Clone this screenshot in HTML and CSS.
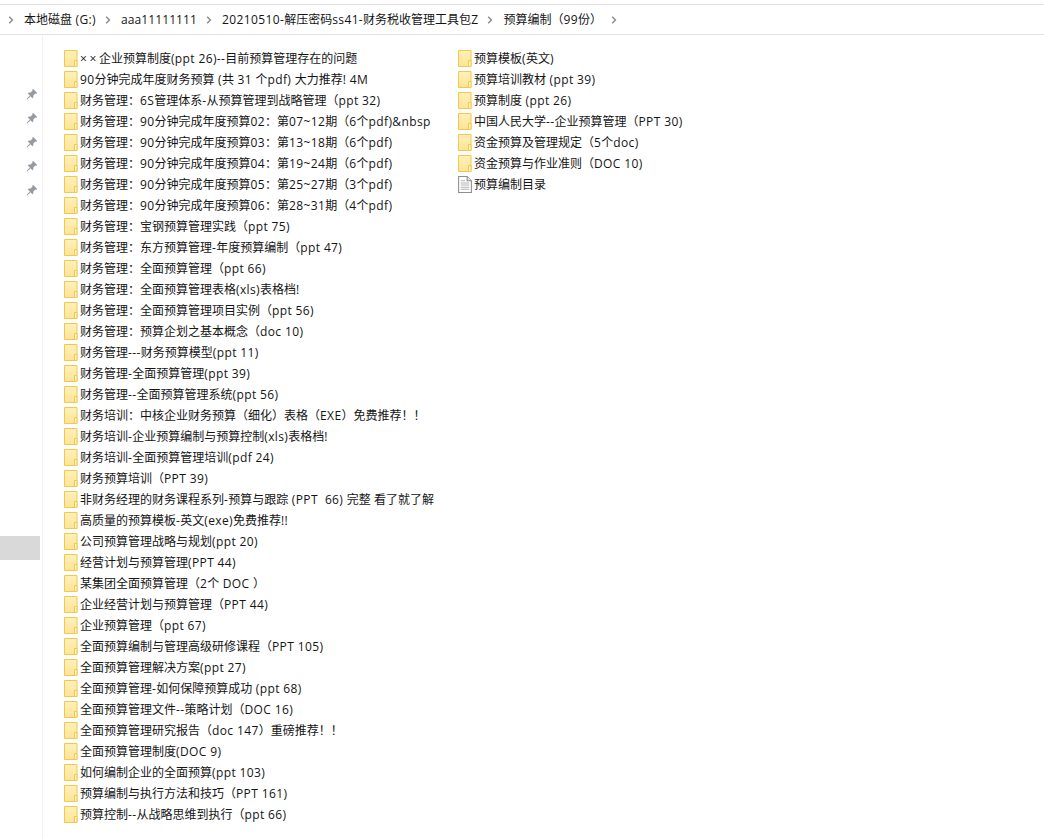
FILE: index.html
```html
<!DOCTYPE html>
<html lang="zh">
<head>
<meta charset="utf-8">
<title>预算编制（99份）</title>
<link rel="stylesheet" href="styles.css">
</head>
<body>
<svg class="defs" width="0" height="0" aria-hidden="true">
  <linearGradient id="fg" x1="0" y1="0" x2="0" y2="1"><stop offset="0" stop-color="#fff1ba"/><stop offset="1" stop-color="#fee394"/></linearGradient>
  <symbol id="folder" viewBox="0 0 14 17">
    <path d="M.5.5h12.5v16H.5z" fill="url(#fg)" stroke="#f2c84e"/>
    <path d="M10.5 16.5V10.5h2.5v6z" fill="#fff3c6" stroke="#f2c84e"/>
  </symbol>
  <symbol id="pin" viewBox="0 0 12 12">
    <path d="M7 .8l4.2 4.2-1 .8-.9-.3-2 2 .1 1.8-.9.9-2-2L1.2 11.4.6 10.8l3.3-3.4-2-2 .9-.9 1.8.1 2-2-.3-.9z" fill="#939aa1"/>
  </symbol>
  <symbol id="doc" viewBox="0 0 13 16">
    <path d="M.5.5h8l4 4v11H.5z" fill="#fff" stroke="#8e8e8e"/>
    <path d="M8.5.5v4h4" fill="#e6e6e6" stroke="#8e8e8e"/>
    <path d="M2.5 4.5h4M2.5 6.5h8M2.5 8.5h8M2.5 10.5h8M2.5 12.5h8" stroke="#b4b4b4"/>
  </symbol>
  <symbol id="chev" viewBox="0 0 6 8">
    <path d="M1.2 .8L4.4 4 1.2 7.2" fill="none" stroke="#8c8c8c" stroke-width="1.5"/>
  </symbol>
</svg>
<header class="crumbs">
  <svg class="sep"><use href="#chev"/></svg><span class="crumb">本地磁盘<span class="l"> (G:)</span></span>
  <svg class="sep"><use href="#chev"/></svg><span class="crumb tight">aaa11111111</span>
  <svg class="sep"><use href="#chev"/></svg><span class="crumb"><span class="l">20210510-</span>解压密码<span class="l">ss41-</span>财务税收管理工具包<span class="l">Z</span></span>
  <svg class="sep"><use href="#chev"/></svg><span class="crumb">预算编制（<span class="l">99</span>份）</span>
  <svg class="sep"><use href="#chev"/></svg>
</header>
<div class="main">
  <nav class="side">
    <div class="pins">
      <svg class="pin"><use href="#pin"/></svg>
      <svg class="pin"><use href="#pin"/></svg>
      <svg class="pin"><use href="#pin"/></svg>
      <svg class="pin"><use href="#pin"/></svg>
      <svg class="pin"><use href="#pin"/></svg>
    </div>
    <div class="selected"></div>
  </nav>
  <section class="files">
    <ul class="col first">
      <li><svg class="ic"><use href="#folder"/></svg><span><span class="x">××</span>企业预算制度<span class="l">(ppt 26)--</span>目前预算管理存在的问题</span></li>
      <li><svg class="ic"><use href="#folder"/></svg><span><span class="l">90</span>分钟完成年度财务预算<span class="l"> (</span>共<span class="l"> 31 </span>个<span class="l">pdf) </span>大力推荐<span class="l">! 4M</span></span></li>
      <li><svg class="ic"><use href="#folder"/></svg><span>财务管理：<span class="l">6S</span>管理体系<span class="l">-</span>从预算管理到战略管理（<span class="l">ppt 32)</span></span></li>
      <li><svg class="ic"><use href="#folder"/></svg><span>财务管理：<span class="l">90</span>分钟完成年度预算<span class="l">02</span>：第<span class="l">07~12</span>期（<span class="l">6</span>个<span class="l">pdf)&amp;nbsp</span></span></li>
      <li><svg class="ic"><use href="#folder"/></svg><span>财务管理：<span class="l">90</span>分钟完成年度预算<span class="l">03</span>：第<span class="l">13~18</span>期（<span class="l">6</span>个<span class="l">pdf)</span></span></li>
      <li><svg class="ic"><use href="#folder"/></svg><span>财务管理：<span class="l">90</span>分钟完成年度预算<span class="l">04</span>：第<span class="l">19~24</span>期（<span class="l">6</span>个<span class="l">pdf)</span></span></li>
      <li><svg class="ic"><use href="#folder"/></svg><span>财务管理：<span class="l">90</span>分钟完成年度预算<span class="l">05</span>：第<span class="l">25~27</span>期（<span class="l">3</span>个<span class="l">pdf)</span></span></li>
      <li><svg class="ic"><use href="#folder"/></svg><span>财务管理：<span class="l">90</span>分钟完成年度预算<span class="l">06</span>：第<span class="l">28~31</span>期（<span class="l">4</span>个<span class="l">pdf)</span></span></li>
      <li><svg class="ic"><use href="#folder"/></svg><span>财务管理：宝钢预算管理实践（<span class="l">ppt 75)</span></span></li>
      <li><svg class="ic"><use href="#folder"/></svg><span>财务管理：东方预算管理<span class="l">-</span>年度预算编制（<span class="l">ppt 47)</span></span></li>
      <li><svg class="ic"><use href="#folder"/></svg><span>财务管理：全面预算管理（<span class="l">ppt 66)</span></span></li>
      <li><svg class="ic"><use href="#folder"/></svg><span>财务管理：全面预算管理表格<span class="l">(xls)</span>表格档<span class="l">!</span></span></li>
      <li><svg class="ic"><use href="#folder"/></svg><span>财务管理：全面预算管理项目实例（<span class="l">ppt 56)</span></span></li>
      <li><svg class="ic"><use href="#folder"/></svg><span>财务管理：预算企划之基本概念（<span class="l">doc 10)</span></span></li>
      <li><svg class="ic"><use href="#folder"/></svg><span>财务管理<span class="l">---</span>财务预算模型<span class="l">(ppt 11)</span></span></li>
      <li><svg class="ic"><use href="#folder"/></svg><span>财务管理<span class="l">-</span>全面预算管理<span class="l">(ppt 39)</span></span></li>
      <li><svg class="ic"><use href="#folder"/></svg><span>财务管理<span class="l">--</span>全面预算管理系统<span class="l">(ppt 56)</span></span></li>
      <li><svg class="ic"><use href="#folder"/></svg><span>财务培训：中核企业财务预算（细化）表格（<span class="l">EXE</span>）免费推荐！！</span></li>
      <li><svg class="ic"><use href="#folder"/></svg><span>财务培训<span class="l">-</span>企业预算编制与预算控制<span class="l">(xls)</span>表格档<span class="l">!</span></span></li>
      <li><svg class="ic"><use href="#folder"/></svg><span>财务培训<span class="l">-</span>全面预算管理培训<span class="l">(pdf 24)</span></span></li>
      <li><svg class="ic"><use href="#folder"/></svg><span>财务预算培训（<span class="l">PPT 39)</span></span></li>
      <li><svg class="ic"><use href="#folder"/></svg><span>非财务经理的财务课程系列<span class="l">-</span>预算与跟踪<span class="l"> (PPT&nbsp; 66) </span>完整 看了就了解</span></li>
      <li><svg class="ic"><use href="#folder"/></svg><span>高质量的预算模板<span class="l">-</span>英文<span class="l">(exe)</span>免费推荐<span class="l">!!</span></span></li>
      <li><svg class="ic"><use href="#folder"/></svg><span>公司预算管理战略与规划<span class="l">(ppt 20)</span></span></li>
      <li><svg class="ic"><use href="#folder"/></svg><span>经营计划与预算管理<span class="l">(PPT 44)</span></span></li>
      <li><svg class="ic"><use href="#folder"/></svg><span>某集团全面预算管理（<span class="l">2</span>个<span class="l"> DOC </span>）</span></li>
      <li><svg class="ic"><use href="#folder"/></svg><span>企业经营计划与预算管理（<span class="l">PPT 44)</span></span></li>
      <li><svg class="ic"><use href="#folder"/></svg><span>企业预算管理（<span class="l">ppt 67)</span></span></li>
      <li><svg class="ic"><use href="#folder"/></svg><span>全面预算编制与管理高级研修课程（<span class="l">PPT 105)</span></span></li>
      <li><svg class="ic"><use href="#folder"/></svg><span>全面预算管理解决方案<span class="l">(ppt 27)</span></span></li>
      <li><svg class="ic"><use href="#folder"/></svg><span>全面预算管理<span class="l">-</span>如何保障预算成功<span class="l"> (ppt 68)</span></span></li>
      <li><svg class="ic"><use href="#folder"/></svg><span>全面预算管理文件<span class="l">--</span>策略计划（<span class="l">DOC 16)</span></span></li>
      <li><svg class="ic"><use href="#folder"/></svg><span>全面预算管理研究报告（<span class="l">doc 147</span>）重磅推荐！！</span></li>
      <li><svg class="ic"><use href="#folder"/></svg><span>全面预算管理制度<span class="l">(DOC 9)</span></span></li>
      <li><svg class="ic"><use href="#folder"/></svg><span>如何编制企业的全面预算<span class="l">(ppt 103)</span></span></li>
      <li><svg class="ic"><use href="#folder"/></svg><span>预算编制与执行方法和技巧（<span class="l">PPT 161)</span></span></li>
      <li><svg class="ic"><use href="#folder"/></svg><span>预算控制<span class="l">--</span>从战略思维到执行（<span class="l">ppt 66)</span></span></li>
    </ul>
    <ul class="col">
      <li><svg class="ic"><use href="#folder"/></svg><span>预算模板<span class="l">(</span>英文<span class="l">)</span></span></li>
      <li><svg class="ic"><use href="#folder"/></svg><span>预算培训教材<span class="l"> (ppt 39)</span></span></li>
      <li><svg class="ic"><use href="#folder"/></svg><span>预算制度<span class="l"> (ppt 26)</span></span></li>
      <li><svg class="ic"><use href="#folder"/></svg><span>中国人民大学<span class="l">--</span>企业预算管理（<span class="l">PPT 30)</span></span></li>
      <li><svg class="ic"><use href="#folder"/></svg><span>资金预算及管理规定（<span class="l">5</span>个<span class="l">doc)</span></span></li>
      <li><svg class="ic"><use href="#folder"/></svg><span>资金预算与作业准则（<span class="l">DOC 10)</span></span></li>
      <li><svg class="ic doc"><use href="#doc"/></svg><span>预算编制目录</span></li>
    </ul>
  </section>
</div>
</body>
</html>
```
FILE: styles.css
```css
* { box-sizing: border-box; }
html, body { margin: 0; height: 100%; }
body {
  width: 1044px;
  height: 839px;
  overflow: hidden;
  background: #fff;
  color: #141414;
  font: 12px/21px "Open Sans", "Noto Sans CJK SC", sans-serif;
  display: flex;
  flex-direction: column;
  padding-top: 4px;
}
.defs { position: absolute; }
.l { letter-spacing: .38px; }
.x { letter-spacing: 2.6px; }
.tight { letter-spacing: .1px; }
.crumbs {
  height: 31px;
  flex: none;
  display: flex;
  align-items: center;
  padding-left: 8px;
  border-top: 1px solid #e2e2e2;
  border-bottom: 1px solid #e2e2e2;
  line-height: 26px;
  white-space: pre;
}
.sep { width: 6px; height: 8px; flex: none; margin-right: 10px; }
.crumb { margin-right: 9px; }
.main { flex: 1; display: flex; min-height: 0; }
.side {
  width: 43px;
  flex: none;
  border-right: 1px solid #f3f3f3;
  padding-top: 53px;
  display: flex;
  flex-direction: column;
}
.pins { display: flex; flex-direction: column; gap: 12px; padding-left: 26px; }
.pin { width: 12px; height: 12px; display: block; }
.selected {
  width: 40px;
  height: 24px;
  margin-top: 340px;
  background: #d9d9d9;
}
.files { display: flex; padding: 13px 0 0 21px; }
.col { list-style: none; margin: 0; padding: 0; }
.col.first { width: 394px; }
.col li { height: 21px; display: flex; align-items: center; white-space: pre; }
.ic { width: 14px; height: 17px; margin-right: 2px; flex: none; }
```
